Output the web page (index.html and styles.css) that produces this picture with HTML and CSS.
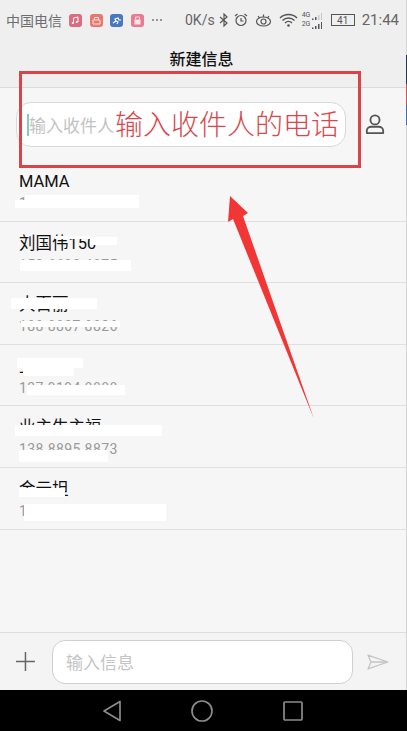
FILE: index.html
```html
<!DOCTYPE html>
<html lang="zh">
<head>
<meta charset="utf-8">
<title>新建信息</title>
<link rel="stylesheet" href="styles.css">
</head>
<body>
<div class="screen">
  <header class="top">
    <div class="status">
      <div class="status-left">
        <span class="carrier">中国电信</span>
        <svg class="app" viewBox="0 0 13 13"><rect width="13" height="13" rx="3" fill="#dc6a80"/><path d="M4.500 9V4l4.500-1v5" fill="none" stroke="#fff" stroke-width="1"/><circle cx="3.800" cy="9" r="1.100" fill="#fff"/><circle cx="7.800" cy="8" r="1.100" fill="#fff"/></svg>
        <svg class="app" viewBox="0 0 13 13"><rect width="13" height="13" rx="3" fill="#e9776f"/><path d="M3 6h7v4H3zM4.500 6V3.500h4V6" fill="none" stroke="#fbe3df" stroke-width="1"/></svg>
        <svg class="app" viewBox="0 0 13 13"><rect width="13" height="13" rx="3" fill="#4a78c0"/><path d="M3 9l3-2-1-2 3-1 1 2h2M6 7l2 1-1 2" fill="none" stroke="#fff" stroke-width="1.200"/></svg>
        <svg class="app" viewBox="0 0 13 13"><rect width="13" height="13" rx="3" fill="#e77a94"/><rect x="3.500" y="5.500" width="6" height="5" fill="#fbe3e8"/><path d="M4.500 5.500V3h4v2.500" fill="none" stroke="#fbe3e8"/></svg>
        <span class="dots"><i></i><i></i><i></i></span>
      </div>
      <div class="status-right">
        <span class="speed">0K/s</span>
        <svg class="ic-bt" viewBox="0 0 10 14"><path d="M1 4l7 6-3 3V1l3 3-7 6" fill="none" stroke="#555" stroke-width="1.200"/></svg>
        <svg class="ic-alarm" viewBox="0 0 14 14"><circle cx="7" cy="7.500" r="5" fill="none" stroke="#555" stroke-width="1.200"/><path d="M7 5v3h2.500M1 3l2.500-2M13 3l-2.500-2" fill="none" stroke="#555" stroke-width="1.200"/></svg>
        <svg class="ic-eye" viewBox="0 0 17 14"><ellipse cx="8.500" cy="8.500" rx="7" ry="4.500" fill="none" stroke="#555" stroke-width="1.200"/><circle cx="8.500" cy="8.500" r="2.500" fill="none" stroke="#555" stroke-width="1.200"/><path d="M3 3l1.500 2M8.500 1.500v2.500M14 3l-1.500 2" fill="none" stroke="#555" stroke-width="1.200"/></svg>
        <svg class="ic-wifi" viewBox="0 0 19 14"><path d="M1 5a12 12 0 0 1 17 0M3.500 7.500a8.500 8.500 0 0 1 12 0M6 10a5 5 0 0 1 7 0" fill="none" stroke="#555" stroke-width="1.400"/><circle cx="9.500" cy="12.500" r="1.300" fill="#555"/></svg>
        <div class="net">
          <span class="net-row">4G<svg class="bars" viewBox="0 0 11 7"><path d="M1 5.500h1.500V7H1zM4 4h1.500v3H4z" fill="#555"/><path d="M7 2h1.500v5H7zM10 0h1v7h-1z" fill="#c9c9c9"/></svg></span>
          <span class="net-row">2G<svg class="bars" viewBox="0 0 11 7"><path d="M1 5.500h1.500V7H1zM4 4h1.500v3H4zM7 2h1.500v5H7zM10 0h1v7h-1z" fill="#555"/></svg></span>
        </div>
        <div class="battery"><span class="battery-level">41</span></div>
        <span class="clock">21:44</span>
      </div>
    </div>
    <h1 class="title">新建信息</h1>
  </header>

  <section class="recipient">
    <div class="recipient-input">
      <span class="caret"></span>
      <span class="placeholder">输入收件人</span>
    </div>
    <svg class="person" viewBox="0 0 22 24"><circle cx="11" cy="7.500" r="5" fill="none" stroke="#555" stroke-width="2"/><path d="M2 22v-2.500c0-3 2.500-4.500 5-4.500h8c2.500 0 5 1.500 5 4.500V22z" fill="none" stroke="#555" stroke-width="2" stroke-linejoin="round"/></svg>
  </section>

  <ul class="contacts">
    <li class="contact"><div class="name">MAMA</div><div class="phone">155 6693 4875</div></li>
    <li class="contact"><div class="name">刘国伟150</div><div class="phone">150 6693 4875</div></li>
    <li class="contact"><div class="name">大百丽</div><div class="phone">188 8807 8826</div></li>
    <li class="contact"><div class="name">王</div><div class="phone">137 9194 8888</div></li>
    <li class="contact"><div class="name">业主生主福</div><div class="phone">138 8895 8873</div></li>
    <li class="contact"><div class="name">金云坦</div><div class="phone">1</div></li>
  </ul>

  <div class="spacer"></div>

  <footer class="composer">
    <svg class="plus" viewBox="0 0 20 20"><path d="M10 0v20M0 10h20" stroke="#666" stroke-width="1.600"/></svg>
    <div class="message-input">输入信息</div>
    <svg class="send" viewBox="0 0 22 16"><path d="M1 1l20 7-20 7 3-7zM4 8h17" fill="none" stroke="#c4c4c4" stroke-width="1.300" stroke-linejoin="round"/></svg>
  </footer>

  <nav class="navbar">
    <svg class="nav-back" viewBox="0 0 20 22"><path d="M18 1.500v19L2 11z" fill="none" stroke="#8c8c8c" stroke-width="1.700" stroke-linejoin="round"/></svg>
    <svg class="nav-home" viewBox="0 0 22 22"><circle cx="11" cy="11" r="10" fill="none" stroke="#8c8c8c" stroke-width="1.700"/></svg>
    <svg class="nav-recent" viewBox="0 0 20 20"><rect x="1" y="1" width="18" height="18" rx="1" fill="none" stroke="#8c8c8c" stroke-width="1.700"/></svg>
  </nav>

  <div class="mask m1"></div>
  <div class="mask m1c"></div>
  <div class="mask m2a"></div>
  <div class="mask m2c"></div>
  <div class="mask m2b"></div>
  <div class="mask m3a"></div>
  <div class="mask m3b"></div>
  <div class="mask m4a"></div>
  <div class="mask m4c"></div>
  <div class="mask m4b"></div>
  <div class="mask m5a"></div>
  <div class="mask m5b"></div>
  <div class="mask m6a"></div>
  <div class="mask m6b"></div>

  <div class="note-box"></div>
  <div class="note-text">输入收件人的电话</div>
  <svg class="arrow" viewBox="0 0 100 235"><path d="M10 6L28 23 23 26 94 229 13 29 8 32z" fill="#f23535"/></svg>
  <div class="edge">
    <span class="edge-navy"></span>
    <span class="edge-red"></span>
    <span class="edge-blue"></span>
  </div>
</div>
</body>
</html>
```

FILE: styles.css
```css
* { box-sizing: border-box; margin: 0; padding: 0; }
html, body { width: 407px; height: 731px; overflow: hidden; background: #f6f6f6; }
body { font-family: "Noto Sans CJK SC", "Roboto", sans-serif; }
.screen { position: relative; width: 407px; height: 731px; display: flex; flex-direction: column; background: #f6f6f6; overflow: hidden; }

.top { height: 88px; background: #efefef; border-bottom: 1px solid #dcdcdc; display: flex; flex-direction: column; }
.status { height: 40px; display: flex; justify-content: space-between; align-items: center; padding: 0 8px 0 6px; color: #666; }
.status-left, .status-right { display: flex; align-items: center; }
.carrier { font-size: 14px; color: #6e6e6e; margin-right: 7px; white-space: nowrap; }
.app { width: 13px; height: 13px; margin-right: 7.500px; }
.dots { display: flex; gap: 2px; margin-left: 1px; }
.dots i { width: 2px; height: 2px; border-radius: 50%; background: #777; }
.speed { font-family: "Roboto", sans-serif; font-size: 14px; color: #666; margin-right: 4px; white-space: nowrap; }
.ic-bt { width: 10px; height: 14px; margin-right: 5px; }
.ic-alarm { width: 14px; height: 14px; margin-right: 7px; }
.ic-eye { width: 17px; height: 14px; margin-right: 7px; }
.ic-wifi { width: 19px; height: 14px; margin-right: 4px; }
.net { display: flex; flex-direction: column; width: 23px; margin-right: 6px; }
.net-row { display: flex; align-items: flex-end; font-family: "Roboto", sans-serif; font-size: 7px; line-height: 9px; color: #555; }
.bars { width: 11px; height: 7px; margin-left: 1px; }
.battery { width: 24px; height: 12px; border: 1px solid #555; display: flex; align-items: center; justify-content: center; margin-right: 7px; }
.battery-level { font-family: "Roboto", sans-serif; font-size: 10px; color: #555; }
.clock { font-family: "Roboto", sans-serif; font-size: 15px; color: #666; }
.title { font-size: 16px; font-weight: 500; color: #111; text-align: center; line-height: 20px; height: 20px; margin-top: 8px; padding-right: 4px; }

.recipient { height: 72px; display: flex; align-items: center; padding: 0 22px 0 16px; justify-content: space-between; }
.recipient-input { width: 330px; height: 45px; margin-top: 1px; background: #fff; border: 1px solid #d9d9d9; border-radius: 15px; display: flex; align-items: center; padding-left: 10px; }
.caret { width: 2px; height: 22px; background: #86c9c2; }
.placeholder { font-size: 17px; color: #c2c2c2; margin-left: 0; white-space: nowrap; }
.person { width: 20px; height: 22px; }

.contacts { list-style: none; }
.contact { height: 61.600px; border-bottom: 1px solid #e0e0e0; padding: 12px 19px 0; }
.name { font-family: "Roboto", "Noto Sans CJK SC", sans-serif; font-size: 16.500px; line-height: 20px; color: #111; }
.phone { font-family: "Roboto", sans-serif; font-size: 14px; line-height: 18px; margin-top: 2px; color: #999; letter-spacing: 0.400px; }

.spacer { flex: 1; }

.composer { height: 58px; background: #f4f4f4; border-top: 1px solid #dedede; display: flex; align-items: center; padding: 0 18px 0 16px; }
.plus { width: 19px; height: 19px; margin-right: 17px; }
.message-input { width: 302px; height: 44px; background: #fff; border: 1px solid #d0d0d0; border-radius: 13px; font-size: 17px; color: #c4c4c4; display: flex; align-items: center; padding-left: 13px; margin-right: 14px; }
.send { width: 22px; height: 16px; }

.navbar { height: 41px; background: #000; display: flex; align-items: center; }
.nav-back { width: 20px; height: 22px; margin-left: 102px; }
.nav-home { width: 22px; height: 22px; margin-left: 69px; }
.nav-recent { width: 20px; height: 20px; margin-left: 70px; }

.mask { position: absolute; background: #fff; }
.m1 { left: 15px; top: 200px; width: 124px; height: 8px; }
.m1c { left: 25px; top: 195px; width: 114px; height: 6px; }
.m2a { left: 90px; top: 237px; width: 27px; height: 8px; }
.m2c { left: 55px; top: 236px; width: 35px; height: 3px; }
.m2b { left: 20px; top: 260px; width: 111px; height: 11px; }
.m3a { left: 11px; top: 298px; width: 86px; height: 11px; }
.m3b { left: 21px; top: 321px; width: 99px; height: 6px; }
.m4a { left: 17px; top: 358px; width: 66px; height: 10px; }
.m4c { left: 23px; top: 368px; width: 51px; height: 8px; }
.m4b { left: 27px; top: 385px; width: 98px; height: 10px; }
.m5a { left: 15px; top: 425px; width: 147px; height: 11px; }
.m5b { left: 19px; top: 450px; width: 89px; height: 12px; }
.m6a { left: 19px; top: 488px; width: 46px; height: 9px; }
.m6b { left: 24px; top: 504px; width: 142px; height: 17px; }

.note-box { position: absolute; left: 19px; top: 71px; width: 342px; height: 97px; border: 3px solid #d8444a; }
.note-text { position: absolute; left: 115px; top: 103px; font-size: 28px; font-weight: 300; line-height: 40px; color: #d9474c; font-family: "Noto Sans CJK SC", sans-serif; white-space: nowrap; }
.arrow { position: absolute; left: 220px; top: 190px; width: 100px; height: 235px; }
.edge { position: absolute; right: 0; top: 0; width: 1px; height: 690px; background: #d4d4d4; display: flex; flex-direction: column; padding-top: 55px; }
.edge-navy { height: 29px; background: #26344f; }
.edge-red { height: 21px; background: #c8545c; }
.edge-blue { height: 20px; background: #3f6ea8; }
```
